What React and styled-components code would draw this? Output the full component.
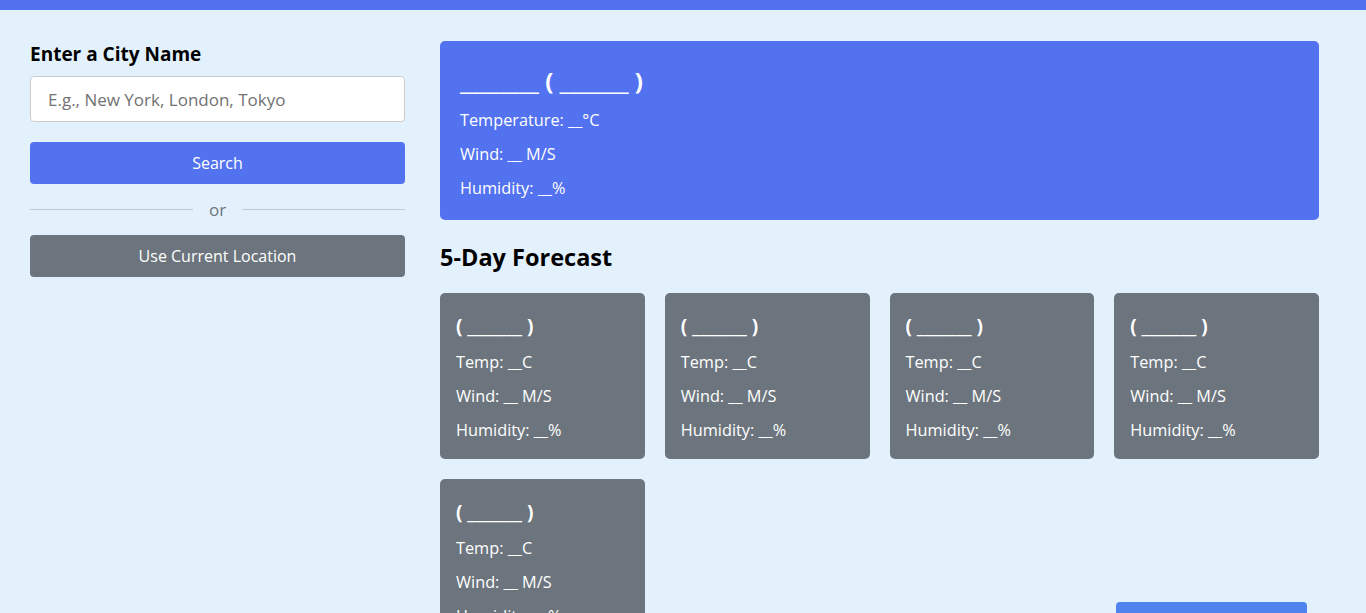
import React from 'react'
import styled, { createGlobalStyle } from 'styled-components'

const GlobalStyle = createGlobalStyle`
  body {
    margin: 0;
    background: #e3f1fc;
    font-family: "Open Sans", "Noto Sans", sans-serif;
    color: #000;
  }
  * { box-sizing: border-box; }
`

const TopBar = styled.div`
  height: 10px;
  background: #5372f0;
`

const Layout = styled.div`
  display: grid;
  grid-template-columns: 375px 1fr;
  gap: 35px;
  padding: 31px 47px 40px 30px;
`

const Sidebar = styled.div`
  display: flex;
  flex-direction: column;
`

const Label = styled.h3`
  margin: 0;
  font-size: 19px;
  font-weight: 700;
  line-height: 26px;
`

const Input = styled.input`
  margin-top: 9px;
  height: 46px;
  width: 100%;
  padding: 0 17px;
  border: 1px solid #ccc;
  border-radius: 4px;
  background: #fff;
  font-family: inherit;
  font-size: 17px;
  outline: none;
  &::placeholder { color: #727272; }
`

const Button = styled.button`
  height: 42px;
  width: 100%;
  border: none;
  border-radius: 4px;
  background: ${props => props.secondary ? '#6c757d' : '#5372f0'};
  color: #fff;
  font-family: inherit;
  font-size: 16px;
  cursor: pointer;
  margin-top: ${props => props.secondary ? '0' : '20px'};
`

const Divider = styled.div`
  display: flex;
  align-items: center;
  gap: 16px;
  height: 51px;
  color: #6c757d;
  font-size: 17px;
  &::before, &::after {
    content: '';
    flex: 1;
    height: 1px;
    background: #c4c9cf;
  }
`

const Main = styled.div`
  display: flex;
  flex-direction: column;
`

const CurrentCard = styled.div`
  background: #5372f0;
  border-radius: 5px;
  color: #fff;
  padding: 24px 20px 15px;
`

const CityTitle = styled.h2`
  margin: 0 0 6px;
  font-size: 24px;
  font-weight: 700;
  line-height: 32px;
`

const Line = styled.p`
  margin: 0;
  font-size: 16.3px;
  line-height: 34px;
  font-weight: 500;
`

const SectionTitle = styled.h2`
  margin: 21px 0 20px;
  font-size: 23.5px;
  font-weight: 700;
  line-height: 32px;
`

const Cards = styled.div`
  display: grid;
  grid-template-columns: repeat(4, 1fr);
  gap: 20px;
`

const DayCard = styled.div`
  background: #6c757d;
  border-radius: 5px;
  color: #fff;
  padding: 18px 16px 12px;
`

const DayTitle = styled.h3`
  margin: 0 0 4px;
  font-size: 19px;
  font-weight: 700;
  line-height: 30px;
`

const FloatButton = styled.button`
  position: fixed;
  top: 602px;
  right: 59px;
  width: 191px;
  height: 40px;
  border: none;
  border-radius: 4px;
  background: #4f84ef;
`

const days = [1, 2, 3, 4, 5]

export default function App () {
  return (
    <>
      <GlobalStyle />
      <TopBar />
      <Layout>
        <Sidebar>
          <Label>Enter a City Name</Label>
          <Input type='text' placeholder='E.g., New York, London, Tokyo' />
          <Button>Search</Button>
          <Divider>or</Divider>
          <Button secondary>Use Current Location</Button>
        </Sidebar>
        <Main>
          <CurrentCard>
            <CityTitle>________ ( _______ )</CityTitle>
            <Line>Temperature: __°C</Line>
            <Line>Wind: __ M/S</Line>
            <Line>Humidity: __%</Line>
          </CurrentCard>
          <SectionTitle>5-Day Forecast</SectionTitle>
          <Cards>
            {days.map(d => (
              <DayCard key={d}>
                <DayTitle>( _______ )</DayTitle>
                <Line>Temp: __C</Line>
                <Line>Wind: __ M/S</Line>
                <Line>Humidity: __%</Line>
              </DayCard>
            ))}
          </Cards>
        </Main>
      </Layout>
      <FloatButton aria-label='action' />
    </>
  )
}
